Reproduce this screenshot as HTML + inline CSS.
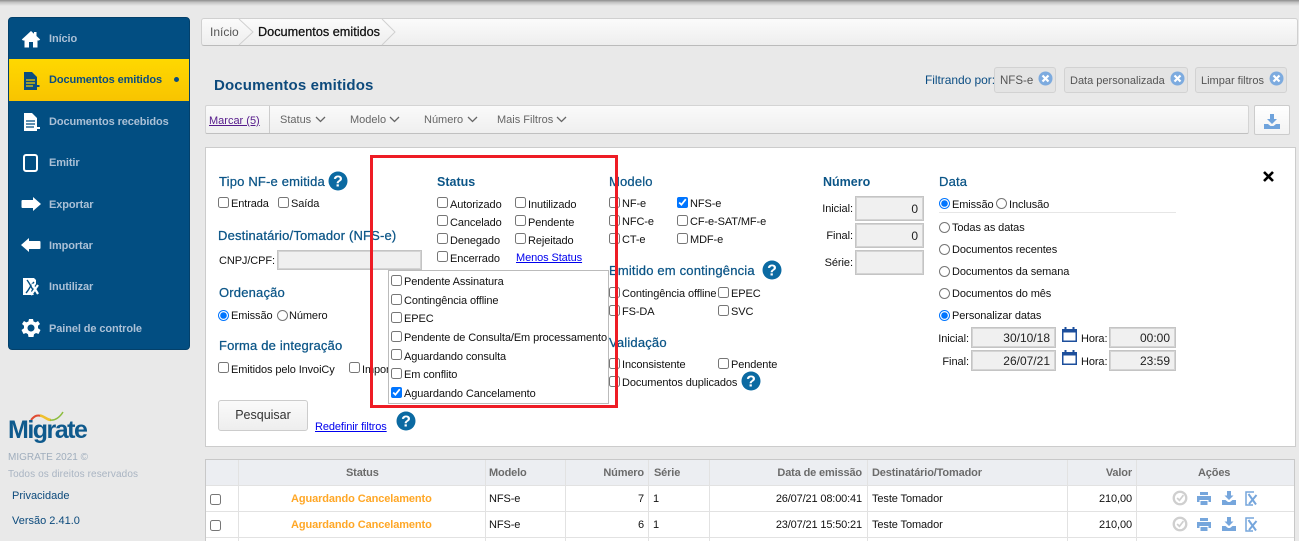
<!DOCTYPE html>
<html lang="pt"><head><meta charset="utf-8"><title>Documentos emitidos</title>
<style>
*{box-sizing:border-box}
html,body{margin:0;padding:0}
body{width:1299px;height:541px;overflow:hidden;position:relative;background:#e9e9e9;font:11px "Liberation Sans",sans-serif;color:#111}
.a{position:absolute}
.t{position:absolute;white-space:nowrap;line-height:14px;height:14px;margin-top:1px;letter-spacing:-.1px}
.h{position:absolute;white-space:nowrap;font-size:13px;line-height:16px;margin-top:1px;letter-spacing:.18px;color:#0b5587;-webkit-text-stroke:.25px #0b5587}
.n{position:absolute;left:49px;font-weight:bold;color:#abc0d6;line-height:14px;margin-top:1px;letter-spacing:-.1px;white-space:nowrap}
input{position:absolute;margin:0;width:11px;height:11px}
.b{position:absolute;background:#f0f0f0;border:1px solid #c4c4c4;text-align:right;font-size:12px;color:#222;padding-right:5px;box-shadow:inset 0 0 0 1px #d4d4d4}
.r{position:absolute;text-align:right;white-space:nowrap;line-height:14px;margin-top:1px;letter-spacing:-.05px}
.tag{position:absolute;height:26px;top:67px;background:#e4e4e4;border:1px solid #d2d2d2;border-radius:3px;line-height:26px;color:#555;white-space:nowrap;padding-left:5px}
.tb{position:absolute;color:#666;line-height:14px;top:112px;margin-top:1px;white-space:nowrap}
.th{position:absolute;top:465px;line-height:14px;margin-top:1px;font-weight:bold;color:#6b6b6b;white-space:nowrap;letter-spacing:-.15px}
.td{position:absolute;line-height:14px;margin-top:1px;white-space:nowrap;color:#111;letter-spacing:-.1px}
.l{position:absolute;background:#e2e2e2}
svg{position:absolute;overflow:visible}
</style></head><body>
<div class="a" style="left:0;top:0;width:1299px;height:6px;background:linear-gradient(#8c8c8c,#c4c4c4 40%,#e9e9e9)"></div>

<!-- Sidebar -->
<div class="a" style="left:8px;top:17px;width:182px;height:333px;background:#024e82;border-radius:4px;border:1px solid #03406a"></div>
<div class="a" style="left:9px;top:59px;width:180px;height:42px;background:linear-gradient(#ffd800,#f8c400)"></div>
<div class="n" style="top:31px">Início</div>
<div class="n" style="top:72px;color:#0b4d80">Documentos emitidos</div>
<div class="a" style="left:174px;top:77px;width:5px;height:5px;border-radius:50%;background:#0b4d80"></div>
<div class="n" style="top:114px">Documentos recebidos</div>
<div class="n" style="top:155px">Emitir</div>
<div class="n" style="top:197px">Exportar</div>
<div class="n" style="top:238px">Importar</div>
<div class="n" style="top:279px">Inutilizar</div>
<div class="n" style="top:321px">Painel de controle</div>

<svg style="left:21px;top:30px" width="20" height="18" viewBox="0 0 20 18"><path fill="#fff" d="M10 1 0.8 9.5 2 10.5H3.5V17.5H8V12H12V17.5H16.5V10.5H18L19.2 9.5 15.5 6V2H13V3.8Z"/></svg>
<svg style="left:23px;top:72px" width="17" height="18" viewBox="0 0 17 18"><path fill="#0b4d80" d="M1 0H9L14 5V13H16.5V15H14V18H1Z"/><path stroke="#f4cb00" stroke-width="1.2" d="M3 8H12M3 11H12M3 14H10"/></svg>
<svg style="left:23px;top:113px" width="18" height="18" viewBox="0 0 18 18"><path fill="#fff" d="M1 0H9L14 5V14H17V16H14V18H1Z"/><path stroke="#024e82" stroke-width="1.2" d="M3 8H12M3 11H12M3 14H11"/></svg>
<svg style="left:23px;top:154px" width="16" height="18" viewBox="0 0 16 18"><rect x="1" y="1" width="13" height="16" rx="2" fill="none" stroke="#fff" stroke-width="2"/></svg>
<svg style="left:21px;top:197px" width="20" height="14" viewBox="0 0 20 14"><path fill="#fff" d="M1.5 3H12V0L20 7 12 14V11H1.5Q0.500 11 0.500 10V4Q0.500 3 1.500 3Z"/></svg>
<svg style="left:21px;top:238px" width="20" height="14" viewBox="0 0 20 14"><path fill="#fff" d="M18.500 3H8V0L0 7 8 14V11H18.500Q19.500 11 19.500 10V4Q19.500 3 18.500 3Z"/></svg>
<svg style="left:23px;top:277px" width="17" height="20" viewBox="0 0 17 20"><path fill="#fff" d="M0 1H11L13 3V7L8 14 11 18H0Z"/><path fill="none" stroke="#024e82" stroke-width="1.400" d="M4 3C8 8 9 13 13 17M11 5C7 9 6 13 3 16"/><path fill="none" stroke="#fff" stroke-width="2.200" d="M9 7 15 17M15 8 8 18"/></svg>
<svg style="left:21px;top:318px" width="20" height="20" viewBox="0 0 20 20"><path fill="#fff" fill-rule="evenodd" d="M8 1H12L12.600 3.500 14.800 4.400 17 3 19 6 17 7.700V10.300L19.500 12 17.500 16 15 15 13 16.300 12.500 19H7.500L7 16.300 5 15 2.500 16 .5 12 3 10.300V7.700L1 6 3 3 5.200 4.400 7.400 3.500ZM10 6.500A3.500 3.500 0 1 0 10.010 6.500Z"/></svg>

<!-- Logo -->
<svg style="left:30px;top:411px" width="34" height="14" viewBox="0 0 34 14"><path fill="none" stroke="#e04b32" stroke-width="2" d="M1 9C5 4 8 4 11 5"/><path fill="none" stroke="#efc02e" stroke-width="2.500" d="M10 4.500C14 5 17 9 21 9"/><path fill="none" stroke="#8cbd3e" stroke-width="1.500" d="M20 9C25 10 30 6 33 1"/></svg>
<div class="t" style="left:8px;top:415px;margin-top:0;height:30px;line-height:30px;font-size:25px;font-weight:bold;letter-spacing:-1.500px;color:#0f5a8d">Migrate</div>
<div class="t" style="left:8px;top:450px;font-size:10px;letter-spacing:0;color:#a0aebd">MIGRATE 2021 ©</div>
<div class="t" style="left:8px;top:467px;font-size:10px;letter-spacing:.1px;color:#a9b4c2">Todos os direitos reservados</div>
<div class="t" style="left:12px;top:488px;color:#0c4a7c;letter-spacing:0">Privacidade</div>
<div class="t" style="left:12px;top:513px;color:#0c4a7c;letter-spacing:0">Versão 2.41.0</div>

<!-- Breadcrumb -->
<div class="a" style="left:201px;top:18px;width:1097px;height:28px;background:linear-gradient(#fbfbfb,#eee);border:1px solid #d0d0d0;border-bottom-color:#bbb;border-radius:3px"></div>
<svg style="left:201px;top:18px" width="200" height="28"><path fill="none" stroke="#d0d0d0" d="M38 1 52 14 38 27M181 1 194 14 181 27"/></svg>
<div class="t" style="left:210px;top:24px;font-size:12px;letter-spacing:0;color:#555">Início</div>
<div class="t" style="left:258px;top:24px;font-size:12.700px;letter-spacing:0;color:#111;-webkit-text-stroke:.25px #111">Documentos emitidos</div>

<div class="t" style="left:214px;top:76px;height:18px;line-height:18px;font-size:15px;font-weight:bold;letter-spacing:.15px;color:#0d4a7c">Documentos emitidos</div>

<!-- Filter tags -->
<div class="t" style="left:925px;top:72px;font-size:12px;letter-spacing:-.05px;color:#0b4d83">Filtrando por:</div>
<div class="tag" style="left:994px;width:62px;font-size:11.500px;line-height:27px">NFS-e</div>
<div class="tag" style="left:1064px;width:124px;font-size:11px;line-height:27px">Data personalizada</div>
<div class="tag" style="left:1195px;width:92px;font-size:11px;line-height:27px">Limpar filtros</div>
<svg style="left:1038px;top:71px" width="15" height="15"><circle cx="7.500" cy="7.500" r="7" fill="#7dabdf"/><path stroke="#fff" stroke-width="2.200" d="M4.500 4.500 10.500 10.500M10.500 4.500 4.500 10.500"/></svg>
<svg style="left:1170px;top:71px" width="15" height="15"><circle cx="7.500" cy="7.500" r="7" fill="#7dabdf"/><path stroke="#fff" stroke-width="2.200" d="M4.500 4.500 10.500 10.500M10.500 4.500 4.500 10.500"/></svg>
<svg style="left:1269px;top:71px" width="15" height="15"><circle cx="7.500" cy="7.500" r="7" fill="#7dabdf"/><path stroke="#fff" stroke-width="2.200" d="M4.500 4.500 10.500 10.500M10.500 4.500 4.500 10.500"/></svg>

<!-- Toolbar -->
<div class="a" style="left:205px;top:105px;width:1044px;height:29px;background:linear-gradient(#fafafa,#efefef);border:1px solid #d4d4d4;border-bottom-color:#c0c0c0;border-radius:2px"></div>
<div class="a" style="left:269px;top:106px;width:1px;height:27px;background:#ccc"></div>
<div class="t" style="left:209px;top:113px;color:#551a8b;letter-spacing:0;text-decoration:underline">Marcar (5)</div>
<div class="tb" style="left:280px">Status</div>
<div class="tb" style="left:350px">Modelo</div>
<div class="tb" style="left:424px">Número</div>
<div class="tb" style="left:497px">Mais Filtros</div>
<svg style="left:315px;top:116px" width="11" height="7"><path fill="none" stroke="#666" stroke-width="1.300" d="M1 1 5.500 5.500 10 1"/></svg>
<svg style="left:389px;top:116px" width="11" height="7"><path fill="none" stroke="#666" stroke-width="1.300" d="M1 1 5.500 5.500 10 1"/></svg>
<svg style="left:467px;top:116px" width="11" height="7"><path fill="none" stroke="#666" stroke-width="1.300" d="M1 1 5.500 5.500 10 1"/></svg>
<svg style="left:556px;top:116px" width="11" height="7"><path fill="none" stroke="#666" stroke-width="1.300" d="M1 1 5.500 5.500 10 1"/></svg>
<div class="a" style="left:1254px;top:105px;width:36px;height:30px;background:linear-gradient(#fff,#f3f3f3);border:1px solid #ccc;border-radius:2px"></div>
<svg style="left:1264px;top:114px" width="16" height="15" viewBox="0 0 16 15"><path fill="#6fa3dc" d="M6 0H10V5H13L8 10 3 5H6ZM0 10H4L6.500 12H9.500L12 10H16V15H0Z"/></svg>

<!-- Filter panel -->
<div class="a" style="left:205px;top:147px;width:1091px;height:300px;background:#fff;border:1px solid #ccc"></div>

<div class="h" style="left:219px;top:173px">Tipo NF-e emitida</div>
<svg style="left:328px;top:171px" width="20" height="20"><circle cx="10" cy="10" r="9.500" fill="#0b6aa2"/><text x="10" y="15.500" text-anchor="middle" font-family="Liberation Sans" font-weight="bold" font-size="16" fill="#fff">?</text></svg>
<input type="checkbox" style="left:218px;top:197px"><div class="t" style="left:231px;top:196px">Entrada</div>
<input type="checkbox" style="left:278px;top:197px"><div class="t" style="left:291px;top:196px">Saída</div>
<div class="h" style="left:218px;top:227px">Destinatário/Tomador (NFS-e)</div>
<div class="t" style="left:219px;top:253px">CNPJ/CPF:</div>
<div class="b" style="left:277px;top:250px;width:145px;height:20px"></div>
<div class="h" style="left:219px;top:284px">Ordenação</div>
<input type="radio" checked style="left:218px;top:310px"><div class="t" style="left:231px;top:308px">Emissão</div>
<input type="radio" style="left:277px;top:310px"><div class="t" style="left:289px;top:308px">Número</div>
<div class="h" style="left:219px;top:337px">Forma de integração</div>
<input type="checkbox" style="left:218px;top:362px"><div class="t" style="left:231px;top:362px">Emitidos pelo InvoiCy</div>
<input type="checkbox" style="left:349px;top:362px"><div class="t" style="left:362px;top:362px">Importados</div>
<div class="a" style="left:218px;top:400px;width:90px;height:31px;background:linear-gradient(#fafafa,#eee);border:1px solid #ccc;border-radius:3px;text-align:center;line-height:29px;font-size:12.500px;color:#333">Pesquisar</div>
<div class="t" style="left:315px;top:419px;color:#0000ee;text-decoration:underline">Redefinir filtros</div>
<svg style="left:396px;top:411px" width="20" height="20"><circle cx="10" cy="10" r="9.500" fill="#0b6aa2"/><text x="10" y="15.500" text-anchor="middle" font-family="Liberation Sans" font-weight="bold" font-size="16" fill="#fff">?</text></svg>

<!-- Status -->
<div class="h" style="left:437px;top:173px;font-weight:bold;font-size:12.500px;letter-spacing:0;-webkit-text-stroke:0">Status</div>
<input type="checkbox" style="left:437px;top:197px"><div class="t" style="left:450px;top:197px">Autorizado</div>
<input type="checkbox" style="left:437px;top:215px"><div class="t" style="left:450px;top:215px">Cancelado</div>
<input type="checkbox" style="left:437px;top:233px"><div class="t" style="left:450px;top:233px">Denegado</div>
<input type="checkbox" style="left:437px;top:251px"><div class="t" style="left:450px;top:251px">Encerrado</div>
<input type="checkbox" style="left:515px;top:197px"><div class="t" style="left:528px;top:197px">Inutilizado</div>
<input type="checkbox" style="left:515px;top:215px"><div class="t" style="left:528px;top:215px">Pendente</div>
<input type="checkbox" style="left:515px;top:233px"><div class="t" style="left:528px;top:233px">Rejeitado</div>
<div class="t" style="left:516px;top:250px;color:#0000ee;text-decoration:underline">Menos Status</div>

<!-- Modelo -->
<div class="h" style="left:609px;top:173px">Modelo</div>
<input type="checkbox" style="left:609px;top:197px"><div class="t" style="left:622px;top:196px">NF-e</div>
<input type="checkbox" style="left:609px;top:215px"><div class="t" style="left:622px;top:214px">NFC-e</div>
<input type="checkbox" style="left:609px;top:233px"><div class="t" style="left:622px;top:232px">CT-e</div>
<input type="checkbox" checked style="left:677px;top:197px"><div class="t" style="left:690px;top:196px">NFS-e</div>
<input type="checkbox" style="left:677px;top:215px"><div class="t" style="left:690px;top:214px">CF-e-SAT/MF-e</div>
<input type="checkbox" style="left:677px;top:233px"><div class="t" style="left:690px;top:232px">MDF-e</div>
<div class="h" style="left:609px;top:262px">Emitido em contingência</div>
<svg style="left:762px;top:260px" width="20" height="20"><circle cx="10" cy="10" r="9.500" fill="#0b6aa2"/><text x="10" y="15.500" text-anchor="middle" font-family="Liberation Sans" font-weight="bold" font-size="16" fill="#fff">?</text></svg>
<input type="checkbox" style="left:609px;top:287px"><div class="t" style="left:622px;top:286px">Contingência offline</div>
<input type="checkbox" style="left:609px;top:305px"><div class="t" style="left:622px;top:304px">FS-DA</div>
<input type="checkbox" style="left:718px;top:287px"><div class="t" style="left:731px;top:286px">EPEC</div>
<input type="checkbox" style="left:718px;top:305px"><div class="t" style="left:731px;top:304px">SVC</div>
<div class="h" style="left:609px;top:334px">Validação</div>
<input type="checkbox" style="left:609px;top:358px"><div class="t" style="left:622px;top:357px">Inconsistente</div>
<input type="checkbox" style="left:609px;top:376px"><div class="t" style="left:622px;top:375px">Documentos duplicados</div>
<input type="checkbox" style="left:718px;top:358px"><div class="t" style="left:731px;top:357px">Pendente</div>
<svg style="left:741px;top:371px" width="20" height="20"><circle cx="10" cy="10" r="9.500" fill="#0b6aa2"/><text x="10" y="15.500" text-anchor="middle" font-family="Liberation Sans" font-weight="bold" font-size="16" fill="#fff">?</text></svg>

<!-- Numero -->
<div class="h" style="left:823px;top:173px;font-weight:bold;font-size:12.500px;letter-spacing:0;-webkit-text-stroke:0">Número</div>
<div class="r" style="right:446px;top:201px">Inicial:</div>
<div class="b" style="left:855px;top:196px;width:69px;height:25px;line-height:24px">0</div>
<div class="r" style="right:446px;top:228px">Final:</div>
<div class="b" style="left:855px;top:223px;width:69px;height:25px;line-height:24px">0</div>
<div class="r" style="right:446px;top:255px">Série:</div>
<div class="b" style="left:855px;top:250px;width:69px;height:25px"></div>

<!-- Data -->
<div class="h" style="left:939px;top:173px">Data</div>
<input type="radio" checked style="left:939px;top:198px"><div class="t" style="left:952px;top:197px">Emissão</div>
<input type="radio" style="left:996px;top:198px"><div class="t" style="left:1009px;top:197px">Inclusão</div>
<div class="a" style="left:939px;top:212px;width:237px;height:1px;background:#e6e6e6"></div>
<input type="radio" style="left:939px;top:222px"><div class="t" style="left:952px;top:220px">Todas as datas</div>
<input type="radio" style="left:939px;top:244px"><div class="t" style="left:952px;top:242px">Documentos recentes</div>
<input type="radio" style="left:939px;top:266px"><div class="t" style="left:952px;top:264px">Documentos da semana</div>
<input type="radio" style="left:939px;top:288px"><div class="t" style="left:952px;top:286px">Documentos do mês</div>
<input type="radio" checked style="left:939px;top:310px"><div class="t" style="left:952px;top:308px">Personalizar datas</div>
<div class="r" style="right:330px;top:331px">Inicial:</div>
<div class="b" style="left:971px;top:327px;width:85px;height:21px;line-height:21px">30/10/18</div>
<div class="r" style="right:330px;top:354px">Final:</div>
<div class="b" style="left:971px;top:350px;width:85px;height:21px;line-height:21px">26/07/21</div>
<svg style="left:1062px;top:327px" width="15" height="15" viewBox="0 0 15 15"><path fill="#1d4f9c" d="M0 2H2.500V0H4.500V2H10.500V0H12.500V2H15V15H0ZM1.500 5.500V13.500H13.500V5.500Z"/></svg>
<svg style="left:1062px;top:350px" width="15" height="15" viewBox="0 0 15 15"><path fill="#1d4f9c" d="M0 2H2.500V0H4.500V2H10.500V0H12.500V2H15V15H0ZM1.500 5.500V13.500H13.500V5.500Z"/></svg>
<div class="t" style="left:1081px;top:331px">Hora:</div>
<div class="b" style="left:1109px;top:327px;width:67px;height:21px;line-height:21px">00:00</div>
<div class="t" style="left:1081px;top:354px">Hora:</div>
<div class="b" style="left:1109px;top:350px;width:67px;height:21px;line-height:21px">23:59</div>
<svg style="left:1263px;top:171px" width="11" height="11"><path stroke="#000" stroke-width="2.600" d="M1 1 10 10M10 1 1 10"/></svg>

<!-- Dropdown -->
<div class="a" style="left:388px;top:270px;width:221px;height:134px;background:#fff;border:1px solid #bbb"></div>
<input type="checkbox" style="left:391px;top:275px"><div class="t" style="left:404px;top:274px">Pendente Assinatura</div>
<input type="checkbox" style="left:391px;top:294px"><div class="t" style="left:404px;top:293px">Contingência offline</div>
<input type="checkbox" style="left:391px;top:312px"><div class="t" style="left:404px;top:311px">EPEC</div>
<input type="checkbox" style="left:391px;top:331px"><div class="t" style="left:404px;top:330px">Pendente de Consulta/Em processamento</div>
<input type="checkbox" style="left:391px;top:349px"><div class="t" style="left:404px;top:349px">Aguardando consulta</div>
<input type="checkbox" style="left:391px;top:368px"><div class="t" style="left:404px;top:367px">Em conflito</div>
<input type="checkbox" checked style="left:391px;top:387px"><div class="t" style="left:404px;top:386px">Aguardando Cancelamento</div>

<!-- Red highlight -->
<div class="a" style="left:370px;top:155px;width:248px;height:253px;border:3px solid #ee1c25"></div>

<!-- Table -->
<div class="a" style="left:205px;top:459px;width:1090px;height:82px;background:#fff;border:1px solid #c8c8c8;border-bottom:0"></div>
<div class="a" style="left:206px;top:460px;width:1088px;height:25px;background:#eceef2"></div>
<div class="l" style="left:206px;top:485px;width:1088px;height:1px"></div>
<div class="l" style="left:206px;top:511px;width:1088px;height:1px"></div>
<div class="l" style="left:206px;top:537px;width:1088px;height:1px"></div>
<div class="l" style="left:238px;top:460px;width:1px;height:81px"></div>
<div class="l" style="left:485px;top:460px;width:1px;height:81px"></div>
<div class="l" style="left:565px;top:460px;width:1px;height:81px"></div>
<div class="l" style="left:648px;top:460px;width:1px;height:81px"></div>
<div class="l" style="left:709px;top:460px;width:1px;height:81px"></div>
<div class="l" style="left:867px;top:460px;width:1px;height:81px"></div>
<div class="l" style="left:1067px;top:460px;width:1px;height:81px"></div>
<div class="l" style="left:1136px;top:460px;width:1px;height:81px"></div>
<div class="th" style="left:346px">Status</div>
<div class="th" style="left:489px">Modelo</div>
<div class="th" style="right:655px">Número</div>
<div class="th" style="left:654px">Série</div>
<div class="th" style="right:437px">Data de emissão</div>
<div class="th" style="left:872px">Destinatário/Tomador</div>
<div class="th" style="right:167px">Valor</div>
<div class="th" style="left:1198px">Ações</div>

<input type="checkbox" style="left:210px;top:494px">
<div class="td" style="left:291px;top:491px;font-weight:bold;color:#ffa726">Aguardando Cancelamento</div>
<div class="td" style="left:489px;top:491px">NFS-e</div>
<div class="td" style="right:655px;top:491px">7</div>
<div class="td" style="left:653px;top:491px">1</div>
<div class="td" style="right:437px;top:491px;letter-spacing:-.15px">26/07/21 08:00:41</div>
<div class="td" style="left:872px;top:491px">Teste Tomador</div>
<div class="td" style="right:167px;top:491px">210,00</div>

<input type="checkbox" style="left:210px;top:520px">
<div class="td" style="left:291px;top:517px;font-weight:bold;color:#ffa726">Aguardando Cancelamento</div>
<div class="td" style="left:489px;top:517px">NFS-e</div>
<div class="td" style="right:655px;top:517px">6</div>
<div class="td" style="left:653px;top:517px">1</div>
<div class="td" style="right:437px;top:517px;letter-spacing:-.15px">23/07/21 15:50:21</div>
<div class="td" style="left:872px;top:517px">Teste Tomador</div>
<div class="td" style="right:167px;top:517px">210,00</div>

<svg style="left:1172px;top:490px" width="16" height="16" viewBox="0 0 14 14"><circle cx="7" cy="7" r="5.500" fill="none" stroke="#cfcfcf" stroke-width="2"/><path fill="none" stroke="#cfcfcf" stroke-width="1.500" d="M4.500 7 6.500 9 10 4.500"/></svg>
<svg style="left:1197px;top:492px" width="14" height="13" viewBox="0 0 14 13"><path fill="#76a6dc" d="M3 0H11V3H3ZM0 4H14V10H11.500V8H2.500V10H0ZM3.500 9H10.500V13H3.500Z"/></svg>
<svg style="left:1222px;top:491px" width="14" height="14" viewBox="0 0 14 14"><path fill="#76a6dc" d="M5 0H9V4.500H11.500L7 9 2.500 4.500H5ZM0 9H3.500L6 11H8L10.500 9H14V14H0Z"/></svg>
<svg style="left:1245px;top:491px" width="13" height="15" viewBox="0 0 13 15"><path fill="none" stroke="#76a6dc" stroke-width="1.500" d="M9 1H1V14H8"/><path fill="none" stroke="#76a6dc" stroke-width="2" d="M3.500 3 11 13.500M11.500 4 4 13"/></svg>

<svg style="left:1172px;top:516px" width="16" height="16" viewBox="0 0 14 14"><circle cx="7" cy="7" r="5.500" fill="none" stroke="#cfcfcf" stroke-width="2"/><path fill="none" stroke="#cfcfcf" stroke-width="1.500" d="M4.500 7 6.500 9 10 4.500"/></svg>
<svg style="left:1197px;top:518px" width="14" height="13" viewBox="0 0 14 13"><path fill="#76a6dc" d="M3 0H11V3H3ZM0 4H14V10H11.500V8H2.500V10H0ZM3.500 9H10.500V13H3.500Z"/></svg>
<svg style="left:1222px;top:517px" width="14" height="14" viewBox="0 0 14 14"><path fill="#76a6dc" d="M5 0H9V4.500H11.500L7 9 2.500 4.500H5ZM0 9H3.500L6 11H8L10.500 9H14V14H0Z"/></svg>
<svg style="left:1245px;top:517px" width="13" height="15" viewBox="0 0 13 15"><path fill="none" stroke="#76a6dc" stroke-width="1.500" d="M9 1H1V14H8"/><path fill="none" stroke="#76a6dc" stroke-width="2" d="M3.500 3 11 13.500M11.500 4 4 13"/></svg>
</body></html>
